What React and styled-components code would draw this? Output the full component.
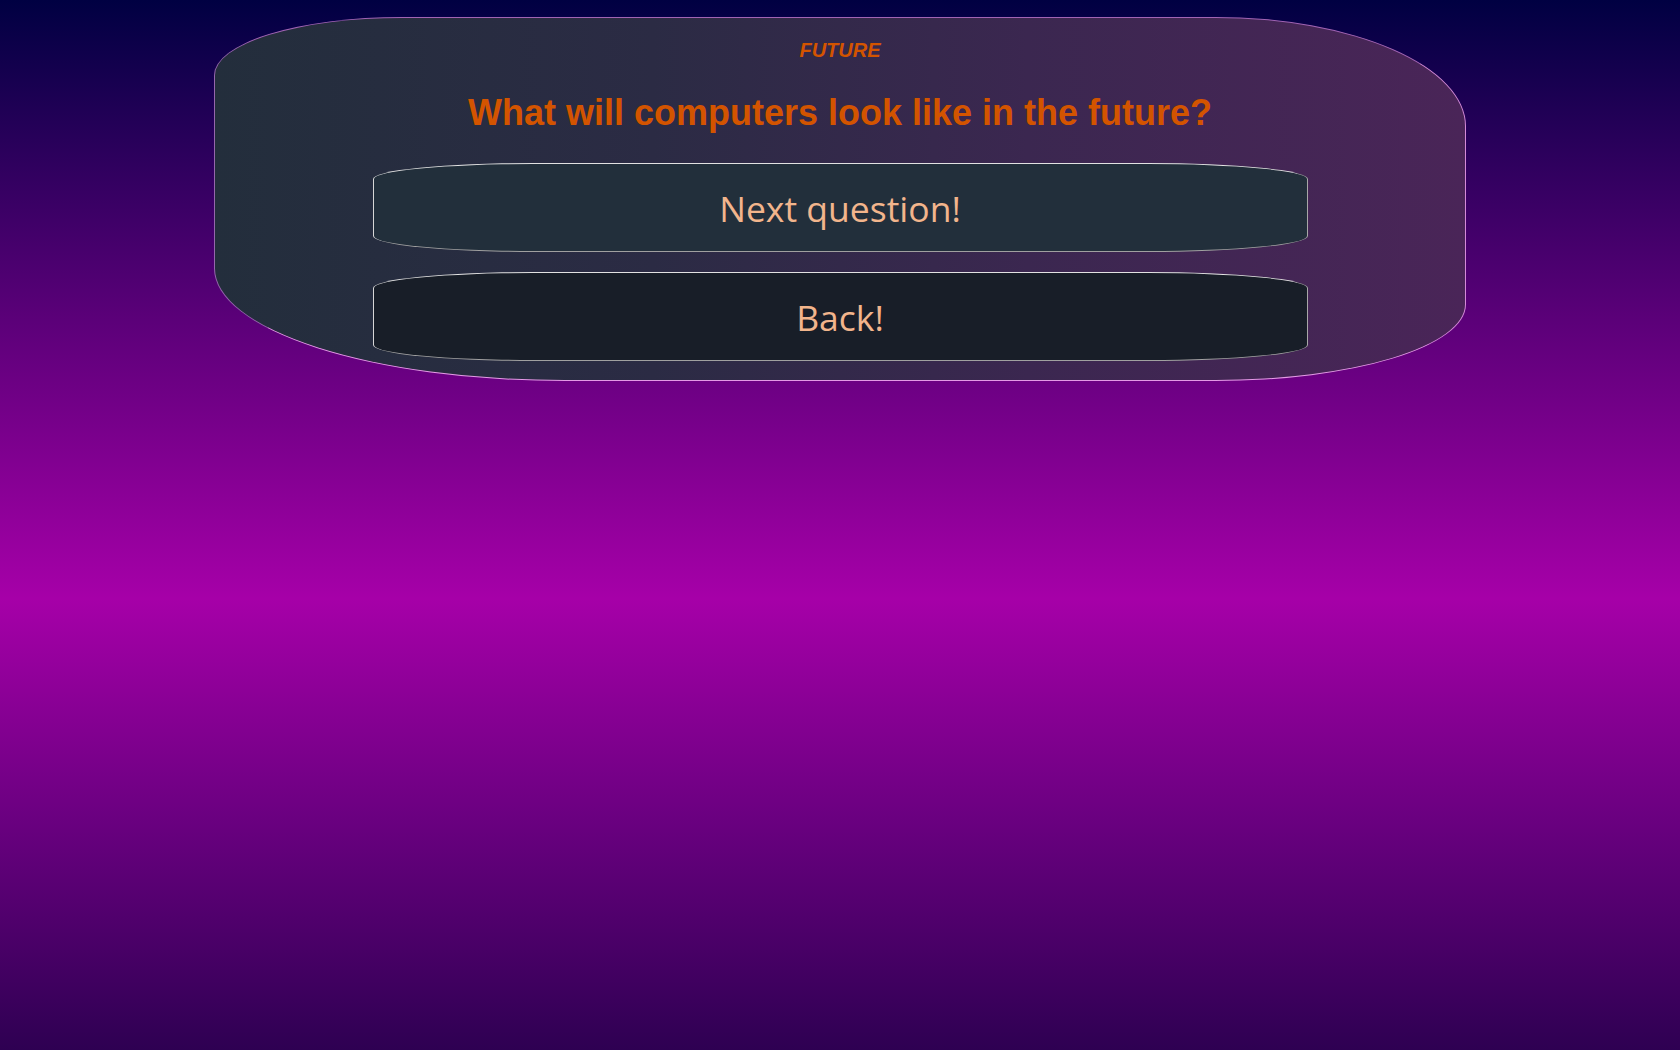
import React from "react";
import styled, { createGlobalStyle } from "styled-components";

const Global = createGlobalStyle`
  html, body {
    margin: 0;
    padding: 0;
    min-height: 100%;
  }
  body {
    min-height: 1050px;
    background: linear-gradient(180deg, #000042 0%, #5a0078 30%, #a600a8 57%, #6a0080 78%, #2e0052 100%);
    font-family: "Liberation Sans", Arial, sans-serif;
  }
`;

const Page = styled.main`
  display: flex;
  flex-direction: column;
  align-items: center;
  padding-top: 17px;
  min-height: 1050px;
  box-sizing: border-box;
`;

const Card = styled.section`
  width: 1250px;
  box-sizing: content-box;
  display: flex;
  flex-direction: column;
  align-items: center;
  padding: 21px 0 19px;
  background: linear-gradient(90deg, #232e3c 0%, #2b2b44 35%, #3b2750 65%, #4a2558 100%);
  border: 1px solid;
  border-color: #a264b4 #d48ad8 #e49ae6 #9566ac;
  border-radius: 15% 20% 20% 28% / 16% 30% 21% 31%;
`;

const Category = styled.h3`
  margin: 0;
  font-family: "Liberation Sans", Arial, sans-serif;
  font-size: 20px;
  line-height: 23px;
  font-weight: bold;
  font-style: italic;
  color: #d35400;
`;

const Question = styled.h1`
  margin: 30px 0 0;
  font-family: "Liberation Sans", Arial, sans-serif;
  font-size: 36px;
  line-height: 41px;
  font-weight: bold;
  color: #d35400;
`;

const Actions = styled.div`
  display: flex;
  flex-direction: column;
  gap: 20px;
  margin-top: 30px;
  width: 935px;
`;

const Button = styled.button`
  height: 89px;
  width: 100%;
  box-sizing: border-box;
  border: 1px solid;
  border-color: #e2e2e2 #a8a8a8 #a0a0a0 #d6d6d6;
  border-radius: 160px / 16px;
  background: ${(p) => (p.$dark ? "#181e28" : "#222f3b")};
  color: #f2b58c;
  font-family: "Open Sans", "Noto Sans", sans-serif;
  font-size: 35.5px;
  cursor: pointer;
  padding: 0;
`;

export default function App() {
  return (
    <>
      <Global />
      <Page>
        <Card>
          <Category>FUTURE</Category>
          <Question>What will computers look like in the future?</Question>
          <Actions>
            <Button>Next question!</Button>
            <Button $dark>Back!</Button>
          </Actions>
        </Card>
      </Page>
    </>
  );
}
